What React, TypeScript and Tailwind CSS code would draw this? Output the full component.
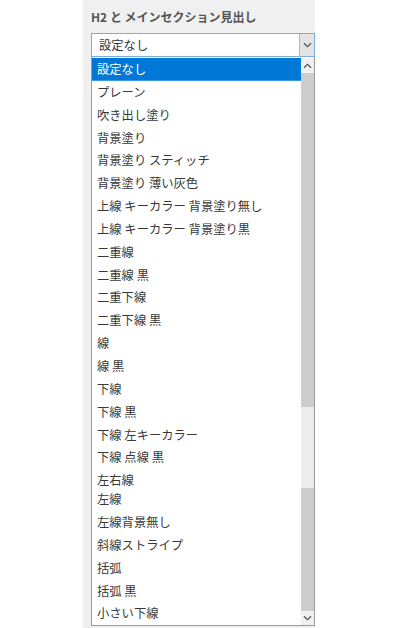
const OPTIONS = [
  "設定なし",
  "プレーン",
  "吹き出し塗り",
  "背景塗り",
  "背景塗り スティッチ",
  "背景塗り 薄い灰色",
  "上線 キーカラー 背景塗り無し",
  "上線 キーカラー 背景塗り黒",
  "二重線",
  "二重線 黒",
  "二重下線",
  "二重下線 黒",
  "線",
  "線 黒",
  "下線",
  "下線 黒",
  "下線 左キーカラー",
  "下線 点線 黒",
  "左右線",
  "左線",
  "左線背景無し",
  "斜線ストライプ",
  "括弧",
  "括弧 黒",
  "小さい下線",
];

function Chevron({ up = false }: { up?: boolean }) {
  return (
    <svg width="9" height="6" viewBox="0 0 9 6" className={up ? "rotate-180" : ""}>
      <path d="M1 1.2 4.5 4.6 8 1.2" fill="none" stroke="#555" strokeWidth="1.3" />
    </svg>
  );
}

export default function App() {
  return (
    <div
      className="flex h-[628px] w-[400px] overflow-hidden bg-white"
      style={{ fontFamily: '"Noto Sans CJK JP", "Noto Sans", sans-serif' }}
    >
      <div className="ml-[83px] w-[232px] bg-[#f0f0f0] pl-2">
        <h2 className="pt-[5px] text-[12px] font-semibold leading-[24px] text-[#555]">
          H2 と メインセクション見出し
        </h2>

        {/* closed select */}
        <div className="mt-[4px] flex h-[24px] w-[224px] border border-[#7aaee0] bg-white">
          <span className="flex-1 pl-[7px] text-[12.3px] leading-[22px] text-[#333]">設定なし</span>
          <span className="flex w-[15px] items-center justify-center border-l border-[#b5b5b5] bg-[#e3e3e3]">
            <Chevron />
          </span>
        </div>

        {/* open list */}
        <div className="flex h-[569px] w-[224px] border-x border-b border-[#9a9a9a] bg-white">
          <ul className="flex-1 pt-px">
            {OPTIONS.map((o, i) => (
              <li
                key={o}
                className={
                  (i === 18 ? "h-[19px] " : "h-[22.85px] ") +
                  (i === 0
                    ? "border-b border-[#3c98e6] bg-[#0078d7] text-white"
                    : "text-[#383838]") +
                  " whitespace-nowrap pl-[5px] text-[12.3px] leading-[22.85px]"
                }
              >
                {o}
              </li>
            ))}
          </ul>
          <div className="flex w-[13px] flex-col pt-px">
            <div className="flex h-[15px] items-center justify-center bg-[#f0f0f0]">
              <Chevron up />
            </div>
            <div className="h-[334px] bg-[#cdcdcd]" />
            <div className="h-[81px] bg-[#ececec]" />
            <div className="flex-1 bg-[#cdcdcd]" />
            <div className="flex h-[14px] items-center justify-center bg-[#f0f0f0]">
              <Chevron />
            </div>
          </div>
        </div>
      </div>
    </div>
  );
}
